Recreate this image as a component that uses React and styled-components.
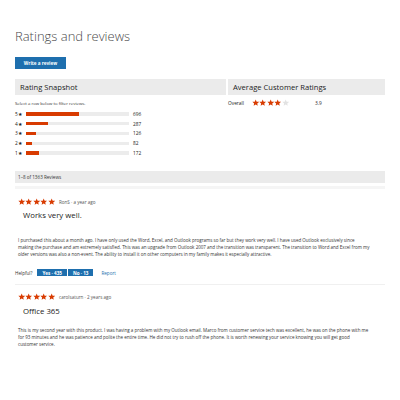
import styled, { createGlobalStyle } from 'styled-components';

const GlobalStyle = createGlobalStyle`
    html, body {
        margin: 0;
        padding: 0;
        background: #fff;
    }
    body {
        font-family: "Open Sans", "Liberation Sans", sans-serif;
        color: #222;
    }
`;

const ORANGE = '#d83b01';

const histogram = [
    { stars: 5, count: 696 },
    { stars: 4, count: 287 },
    { stars: 3, count: 126 },
    { stars: 2, count: 82 },
    { stars: 1, count: 172 },
];

const reviews = [
    {
        author: 'RonS',
        when: 'a year ago',
        title: 'Works very well.',
        lines: [
            'I purchased this about a month ago. I have only used the Word, Excel, and Outlook programs so far but they work very well. I have used Outlook exclusively since',
            'making the purchase and am extremely satisfied. This was an upgrade from Outlook 2007 and the transition was transparent. The transition to Word and Excel from my',
            'older versions was also a non-event. The ability to install it on other computers in my family makes it especially attractive.',
        ],
        helpful: { yes: 435, no: 13 },
    },
    {
        author: 'carolsaturn',
        when: '2 years ago',
        title: 'Office 365',
        lines: [
            'This is my second year with this product. I was having a problem with my Outlook email. Marco from customer service tech was excellent, he was on the phone with me',
            'for 93 minutes and he was patience and polite the entire time. He did not try to rush off the phone. It is worth renewing your service knowing you will get good',
            'customer service.',
        ],
    },
];

function Star({ size = 7, color = ORANGE }) {
    return (
        <svg width={size} height={size} viewBox="0 0 24 24">
            <polygon
                points="12,1.5 15.1,8.6 22.8,9.3 17,14.4 18.7,22 12,18 5.3,22 7,14.4 1.2,9.3 8.9,8.6"
                fill={color}
            />
        </svg>
    );
}

function Stars({ value, size }) {
    return (
        <StarRow>
            {[1, 2, 3, 4, 5].map((i) => (
                <Star key={i} size={size} color={i <= value ? ORANGE : '#e2e2e2'} />
            ))}
        </StarRow>
    );
}

export default function App() {
    const total = 1363;
    return (
        <>
            <GlobalStyle />
            <Page>
                <Title>Ratings and reviews</Title>
                <WriteButton>Write a review</WriteButton>

                <Snapshot>
                    <Column>
                        <PanelHeader>Rating Snapshot</PanelHeader>
                        <Hint>Select a row below to filter reviews.</Hint>
                        {histogram.map((h) => (
                            <BarRow key={h.stars}>
                                <BarLabel>{h.stars}&#9733;</BarLabel>
                                <Track>
                                    <Fill style={{ width: `${(h.count / total) * 100}%` }} />
                                </Track>
                                <Count>{h.count}</Count>
                            </BarRow>
                        ))}
                    </Column>
                    <Column>
                        <PanelHeader>Average Customer Ratings</PanelHeader>
                        <OverallRow>
                            <OverallLabel>Overall</OverallLabel>
                            <Stars value={4} size={7.4} />
                            <Score>3.9</Score>
                        </OverallRow>
                    </Column>
                </Snapshot>

                <ListHeader>1–8 of 1363 Reviews</ListHeader>

                {reviews.map((r, idx) => (
                    <Review key={r.author} $first={idx === 0} $last={idx === reviews.length - 1}>
                        <ReviewMeta>
                            <Stars value={5} size={7.4} />
                            <Byline>{r.author} · {r.when}</Byline>
                        </ReviewMeta>
                        <ReviewTitle>{r.title}</ReviewTitle>
                        <Body $wide={!!r.helpful}>
                            {r.lines.map((l, i) => (
                                <span key={i}>{l}<br /></span>
                            ))}
                        </Body>
                        {r.helpful && (
                            <Helpful>
                                <span>Helpful?</span>
                                <VoteButton>Yes · {r.helpful.yes}</VoteButton>
                                <VoteButton>No · {r.helpful.no}</VoteButton>
                                <ReportLink>Report</ReportLink>
                            </Helpful>
                        )}
                    </Review>
                ))}
            </Page>
        </>
    );
}

const Page = styled.div`
    width: 370px;
    padding: 28px 15px 0;
    display: flex;
    flex-direction: column;
    align-items: flex-start;
`;

const Title = styled.h1`
    margin: 0;
    font-size: 13px;
    line-height: 16px;
    font-weight: 300;
    color: #4a4a4a;
`;

const WriteButton = styled.div`
    margin-top: 13px;
    width: 51px;
    height: 12px;
    background: #1e6fae;
    color: #fff;
    font-size: 4.6px;
    font-weight: 700;
    display: flex;
    align-items: center;
    justify-content: center;
`;

const Snapshot = styled.div`
    margin-top: 10px;
    width: 100%;
    display: grid;
    grid-template-columns: 211px 1fr;
    column-gap: 2px;
`;

const Column = styled.div`
    display: flex;
    flex-direction: column;
`;

const PanelHeader = styled.div`
    height: 16px;
    background: #ebebeb;
    display: flex;
    align-items: center;
    padding-left: 5px;
    font-size: 7.6px;
    color: #222;
`;

const Hint = styled.div`
    margin: 5px 0 3px;
    font-size: 4.3px;
    line-height: 6px;
    color: #333;
`;

const BarRow = styled.div`
    height: 9.8px;
    display: flex;
    align-items: center;
    font-size: 4.8px;
    color: #222;
`;

const BarLabel = styled.span`
    width: 11px;
`;

const Track = styled.div`
    width: 103px;
    height: 3.5px;
    background: #ececec;
`;

const Fill = styled.div`
    height: 100%;
    background: ${ORANGE};
`;

const Count = styled.span`
    margin-left: 4px;
`;

const OverallRow = styled.div`
    margin-top: 4px;
    display: flex;
    align-items: center;
    font-size: 4.8px;
    color: #222;
`;

const OverallLabel = styled.span`
    width: 24px;
`;

const StarRow = styled.span`
    display: inline-flex;
    svg { display: block; }
`;

const Score = styled.span`
    margin-left: 26px;
`;

const ListHeader = styled.div`
    margin-top: 13px;
    width: 100%;
    box-sizing: border-box;
    height: 15px;
    background: #ebebeb;
    display: flex;
    align-items: center;
    padding-left: 3px;
    font-size: 4.6px;
    color: #333;
    border-bottom: 3px solid #fff;
    box-shadow: 0 3px 0 #f5f5f5;
`;

const Review = styled.div`
    width: 100%;
    padding: ${(p) => (p.$first ? '12px' : '8px')} 0 8px 3px;
    box-sizing: border-box;
    border-bottom: 1px solid ${(p) => (p.$last ? 'transparent' : '#f0f0f0')};
`;

const ReviewMeta = styled.div`
    display: flex;
    align-items: center;
    gap: 4px;
`;

const Byline = styled.span`
    font-size: 4.6px;
    color: #555;
`;

const ReviewTitle = styled.div`
    margin: 5px 0 0 5px;
    font-size: 7.8px;
    line-height: 11px;
    color: #222;
`;

const Body = styled.p`
    margin: ${(p) => (p.$wide ? '16px' : '10px')} 0 0;
    font-size: 4.5px;
    line-height: 7px;
    color: #333;
    white-space: nowrap;
`;

const Helpful = styled.div`
    margin: 11px 0 0 -3px;
    display: flex;
    align-items: center;
    gap: 1px;
    font-size: 4.6px;
    color: #333;
    span:first-child { margin-right: 4px; }
`;

const VoteButton = styled.div`
    height: 7px;
    padding: 0 5px;
    background: #1e6fae;
    color: #fff;
    font-weight: 700;
    display: flex;
    align-items: center;
`;

const ReportLink = styled.span`
    margin-left: 7px;
    color: #1e6fae;
`;
